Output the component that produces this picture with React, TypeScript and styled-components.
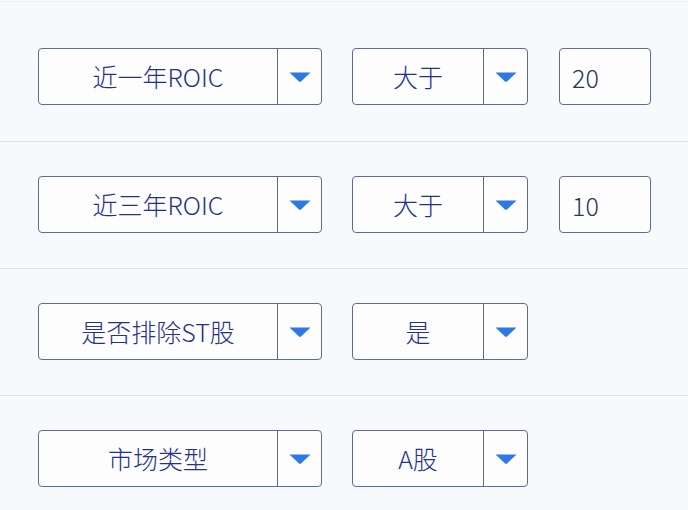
import React from "react";
import styled, { createGlobalStyle } from "styled-components";

const GlobalStyle = createGlobalStyle`
  html, body {
    margin: 0;
    padding: 0;
    background: #f7f9fc;
  }
  body {
    font-family: "Noto Sans CJK SC", "Noto Sans", sans-serif;
  }
`;

const Panel = styled.div`
  width: 688px;
  height: 510px;
  overflow: hidden;
  background: #f7f9fc;
  padding-top: 1px;
  box-sizing: border-box;
`;

const TopRule = styled.div`
  height: 1px;
  background: #eef0f4;
`;

const Row = styled.div<{ $first?: boolean }>`
  display: flex;
  align-items: center;
  gap: 30px;
  padding: ${(p) => (p.$first ? "46px 0 36px" : "34px 0 35px")} 38px;
  border-bottom: 1px solid #e0e2e7;
`;

const Select = styled.div<{ $width: number }>`
  display: flex;
  width: ${(p) => p.$width}px;
  height: 57px;
  box-sizing: border-box;
  border: 1px solid #5b6d91;
  border-radius: 4px;
  background: #fdfdfe;
`;

const SelectLabel = styled.div`
  flex: 1;
  display: flex;
  align-items: center;
  justify-content: center;
  font-size: 25px;
  font-weight: 300;
  color: #26308a;
  border-right: 1px solid #5b6d91;
  padding-bottom: 1px;
`;

const ArrowCell = styled.div`
  width: 43px;
  display: flex;
  align-items: center;
  justify-content: center;
`;

const ValueBox = styled.div`
  width: 92px;
  height: 57px;
  box-sizing: border-box;
  border: 1px solid #5b6d91;
  border-radius: 4px;
  background: #fdfdfe;
  display: flex;
  align-items: center;
  padding-left: 12px;
  font-size: 25px;
  font-weight: 300;
  color: #2b3556;
  margin-left: 1px;
`;

const Caret = () => (
  <svg width="22" height="10" viewBox="0 0 22 10">
    <path d="M0.5 0.5 H21.5 L12 9.5 Q11 10.3 10 9.5 Z" fill="#2f79e6" />
  </svg>
);

type SelectProps = { label: string; width: number };

const Dropdown = ({ label, width }: SelectProps) => (
  <Select $width={width}>
    <SelectLabel>{label}</SelectLabel>
    <ArrowCell>
      <Caret />
    </ArrowCell>
  </Select>
);

const rows = [
  { field: "近一年ROIC", op: "大于", value: "20" },
  { field: "近三年ROIC", op: "大于", value: "10" },
  { field: "是否排除ST股", op: "是" },
  { field: "市场类型", op: "A股" },
];

const App = () => {
  return (
    <>
      <GlobalStyle />
      <Panel>
        <TopRule />
        {rows.map((r, i) => (
          <Row key={r.field} $first={i === 0}>
            <Dropdown label={r.field} width={284} />
            <Dropdown label={r.op} width={176} />
            {r.value && <ValueBox>{r.value}</ValueBox>}
          </Row>
        ))}
      </Panel>
    </>
  );
};

export default App;
